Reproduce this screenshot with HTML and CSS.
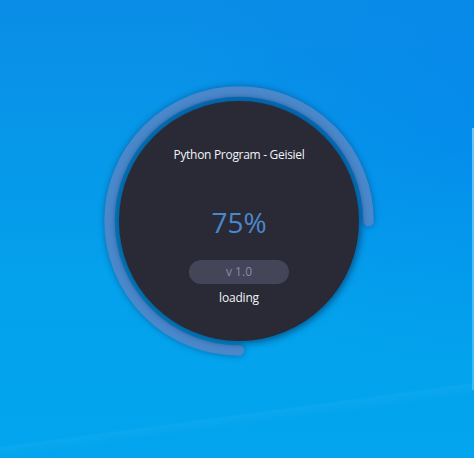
FILE: index.html
```html
<!DOCTYPE html>
<html lang="en">
<head>
<meta charset="utf-8">
<title>Python Program - Geisiel</title>
<link rel="stylesheet" href="styles.css">
</head>
<body>
  <div class="desktop">
    <div class="splash">
      <svg class="ring" width="280" height="280" viewBox="0 0 280 280" aria-hidden="true">
        <path d="M 140 269.5 A 129.5 129.5 0 1 1 269.5 140" fill="none" stroke="#4a88cc" stroke-width="10.5" stroke-linecap="round"/>
      </svg>
      <div class="circle">
        <div class="title">Python Program - Geisiel</div>
        <div class="percent">75%</div>
        <div class="version">v 1.0</div>
        <div class="status">loading</div>
      </div>
    </div>
  </div>
  <div class="edge"></div>
</body>
</html>
```
FILE: styles.css
```css
html, body {
  margin: 0;
  padding: 0;
  width: 474px;
  height: 458px;
  overflow: hidden;
}

body {
  position: relative;
  font-family: "Open Sans", "Noto Sans", sans-serif;
  background:
    linear-gradient(172.3deg, rgba(255,255,255,0) 0 85.5%, rgba(140,225,255,0.06) 85.8%, rgba(0,150,230,0.03) 88%, rgba(0,150,230,0.03) 100%),
    radial-gradient(ellipse 300px 260px at 100% 25%, rgba(0,120,240,0.35), rgba(0,120,240,0) 100%),
    linear-gradient(180deg, #0a8de6 0%, #0797e9 30%, #04a1ec 60%, #02a5ee 100%);
}

.desktop {
  padding: 81px 0 0 99px;
}

.splash {
  position: relative;
  width: 280px;
  height: 280px;
  display: grid;
  place-items: center;
}

.ring {
  position: absolute;
  left: 0;
  top: 0;
  filter: drop-shadow(0 0 3px rgba(0, 40, 90, 0.45));
}

.circle {
  position: relative;
  width: 240px;
  height: 240px;
  border-radius: 50%;
  background: #292a36;
  box-shadow: 0 0 6px 3px rgba(0, 30, 70, 0.5);
  display: flex;
  flex-direction: column;
  align-items: center;
  padding-top: 45px;
  box-sizing: border-box;
}

.title {
  font-size: 12px;
  letter-spacing: -0.3px;
  line-height: 18px;
  color: #f2f4f8;
}

.percent {
  margin-top: 41px;
  font-size: 28px;
  line-height: 34px;
  color: #4a88cc;
}

.version {
  margin-top: 21px;
  width: 100px;
  height: 24px;
  border-radius: 12px;
  background: #444558;
  color: #8a8aa8;
  font-size: 12px;
  line-height: 24px;
  text-align: center;
}

.status {
  margin-top: 5px;
  font-size: 12px;
  letter-spacing: -0.2px;
  line-height: 18px;
  color: #f2f4f8;
}

.edge {
  position: absolute;
  left: 472px;
  top: 128px;
  width: 2px;
  height: 262px;
  background: linear-gradient(180deg, rgba(150,220,255,0.7), rgba(120,210,255,0.45));
}
```
